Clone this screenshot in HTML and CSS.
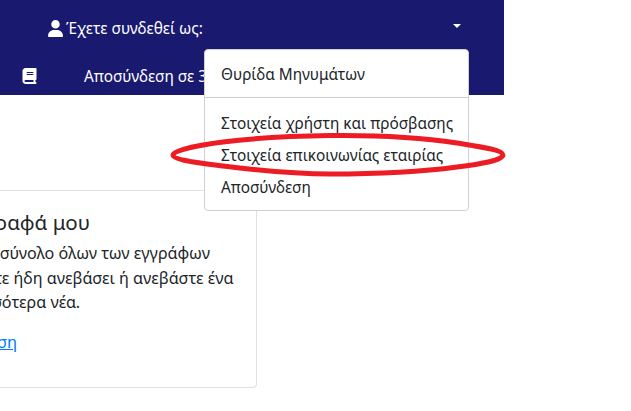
FILE: index.html
```html
<!DOCTYPE html>
<html lang="el">
<head>
  <meta charset="UTF-8">
  <title>Έγγραφα</title>
  <link rel="stylesheet" href="styles.css">
</head>
<body>
  <div class="navbar">
    <div class="nav-row nav-user">
      <svg class="icon-user" viewBox="0 0 448 512"><path fill="#fff" d="M224 256A128 128 0 1 0 224 0a128 128 0 1 0 0 256zm-45.700 48C79.800 304 0 383.800 0 482.300 0 498.700 13.300 512 29.700 512h388.600c16.400 0 29.700-13.300 29.700-29.700C448 383.800 368.200 304 269.700 304h-91.400z"/></svg>
      <span>Έχετε συνδεθεί ως:</span>
      <span class="caret"></span>
    </div>
    <div class="nav-row nav-links">
      <svg class="icon-book" viewBox="0 0 448 512"><path fill="#fff" d="M96 0C43 0 0 43 0 96v320c0 53 43 96 96 96h320a32 32 0 0 0 0-64v-64c17.700 0 32-14.300 32-32V32c0-17.700-14.300-32-32-32H96zm0 384h256v64H96a32 32 0 0 1 0-64zm32-240c0-8.800 7.200-16 16-16h192a16 16 0 0 1 0 32H144c-8.800 0-16-7.200-16-16zm16 48h192a16 16 0 0 1 0 32H144a16 16 0 0 1 0-32z"/></svg>
      <span class="logout-timer">Αποσύνδεση σε 30 λεπτά</span>
    </div>
  </div>

  <div class="content">
    <div class="card">
      <h3>Τα έγγραφά μου</h3>
      <p>Δείτε το σύνολο όλων των εγγράφων που έχετε ήδη ανεβάσει ή ανεβάστε ένα ή περισσότερα νέα.</p>
      <a href="#">Μετάβαση</a>
    </div>
  </div>

  <div class="dropdown">
    <a class="dropdown-item" href="#">Θυρίδα Μηνυμάτων</a>
    <div class="divider"></div>
    <a class="dropdown-item" href="#">Στοιχεία χρήστη και πρόσβασης</a>
    <a class="dropdown-item" href="#">Στοιχεία επικοινωνίας εταιρίας</a>
    <a class="dropdown-item" href="#">Αποσύνδεση</a>
  </div>

  <!-- red marker round the highlighted menu item -->
  <svg class="marker" viewBox="0 0 631 411"><path d="M173 155C173 150 200 145 223 142C255 138 290 136 330 135.500C375 135 425 138 457 143C482 147 503 150 503 155C503 160 482 164 457 167C420 172 375 174 330 174C290 174 255 170 223 166C200 163 173 160 173 155Z"/></svg>
</body>
</html>
```

FILE: styles.css
```css
html, body {
  margin: 0;
  height: 411px;
  overflow: hidden;
}
body {
  position: relative;
  width: 631px;
  background-color: #fff;
  font-family: "Noto Sans", "Open Sans", sans-serif;
  font-size: 15.35px;
  color: #212529;
}
.navbar {
  width: 504px;
  height: 95px;
  background-color: #191970;
  color: #fff;
}
.nav-row {
  display: flex;
  align-items: center;
}
.nav-user {
  height: 56px;
  padding-left: 48px;
  padding-right: 43px;
}
.icon-user {
  width: 15px;
  height: 17px;
  margin-right: 3px;
}
.caret {
  margin-left: auto;
  margin-top: -5px;
  border-top: 4px solid #fff;
  border-left: 4px solid transparent;
  border-right: 4px solid transparent;
}
.nav-links {
  height: 39px;
  padding-left: 22px;
}
.icon-book {
  width: 15px;
  height: 16px;
}
.logout-timer {
  margin-left: 47px;
  white-space: nowrap;
}
.content {
  padding-top: 95px;
}
.card {
  width: 342px;
  height: 198px;
  box-sizing: border-box;
  margin-left: -85px;
  padding: 17px 18px 17px 20px;
  border: 1px solid #dfdfdf;
  border-radius: 4px;
}
.card h3 {
  margin: 0 0 5px;
  font-size: 20.5px;
  line-height: 28px;
  font-weight: 400;
}
.card p {
  margin: 0 0 15px;
  font-size: 16.1px;
  line-height: 24.500px;
}
.card a {
  font-size: 16.5px;
  color: #007bff;
}
.dropdown {
  position: absolute;
  left: 204px;
  top: 49px;
  width: 265px;
  height: 162px;
  box-sizing: border-box;
  padding-top: 8px;
  background-color: #fff;
  border: 1px solid #d0d0d0;
  border-radius: 4px;
}
.dropdown-item {
  display: block;
  padding: 4px 16px;
  line-height: 24px;
  color: #212529;
  text-decoration: none;
  white-space: nowrap;
}
.divider {
  margin: 7px 0 9px;
  border-top: 1px solid #ccc;
}
.marker {
  position: absolute;
  left: 0;
  top: 0;
  width: 631px;
  height: 411px;
  fill: none;
  stroke: #ed1c24;
  stroke-width: 5;
}
```
